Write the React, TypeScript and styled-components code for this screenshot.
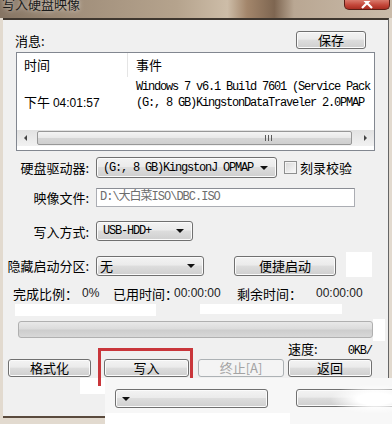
import React from 'react'
import styled, { createGlobalStyle } from 'styled-components'

const GlobalStyle = createGlobalStyle`
  * { box-sizing: border-box; }
  html, body { margin: 0; padding: 0; background: #fff; }
  body { font-family: "Noto Sans CJK SC", "Liberation Sans", sans-serif; }
`

const MONO = `"Liberation Mono", "Noto Sans CJK SC", monospace`
const SANS = `"Noto Sans CJK SC", "Liberation Sans", sans-serif`

const Window = styled.div`
  position: relative;
  width: 392px;
  height: 424px;
  overflow: hidden;
  background: #e2dacf;
  display: flex;
  flex-direction: column;
`

const TitleBar = styled.div`
  height: 18px;
  flex: none;
  display: flex;
  justify-content: space-between;
  align-items: flex-start;
  background: linear-gradient(
    90deg,
    #857463 0%,
    #a08e7a 18%,
    #b5a38d 45%,
    #cdbda8 58%,
    #a3866b 63%,
    #7e6651 70%,
    #b9a793 75%,
    #cabba9 100%
  );
  overflow: hidden;
`

const TitleText = styled.div`
  margin: -3px 0 0 2px;
  font-size: 13px;
  line-height: 14px;
  color: #1b1b1b;
  text-shadow: 0 0 5px rgba(255, 255, 255, 0.8);
`

const CloseButton = styled.div`
  width: 46px;
  height: 10px;
  margin-right: 2px;
  display: flex;
  justify-content: center;
  align-items: flex-end;
  border: 1px solid #5b1e16;
  border-top: none;
  border-radius: 0 0 5px 5px;
  background: linear-gradient(#d97a6c, #c4473a 55%, #a92d21);
`

const Body = styled.div`
  flex: 1;
  margin: 0 3px 6px;
  display: flex;
  flex-direction: column;
  background: #f0f0f0;
  border-top: 2px solid #3f372f;
  border-right: 1px solid #666;
  border-bottom: 2px solid #5a4a3d;
`

const MsgHeader = styled.div`
  height: 18px;
  margin: 11px 22px 0 12px;
  display: flex;
  justify-content: space-between;
  align-items: center;
  font-size: 13px;
`

const Button = styled.button<{ $w: number; $h?: number; $ml?: number }>`
  width: ${(p) => p.$w}px;
  height: ${(p) => p.$h ?? 18}px;
  margin: 0 0 0 ${(p) => p.$ml ?? 0}px;
  padding: 0;
  flex: none;
  font-family: ${SANS};
  font-size: 13px;
  line-height: 14px;
  color: #000;
  border: 1px solid #707070;
  border-radius: 3px;
  background: linear-gradient(#f3f3f3, #ebebeb 45%, #dddddd 50%, #cfcfcf);
  box-shadow: inset 0 0 0 1px #fbfbfb;

  &:disabled {
    color: #a3a3a3;
    border-color: #adb2b5;
    background: #f4f4f4;
    box-shadow: none;
  }
`

const ListBox = styled.div`
  margin: 3px 13px 0;
  height: 99px;
  flex: none;
  display: flex;
  flex-direction: column;
  padding-bottom: 4px;
  border: 1px solid #828790;
  background: #fff;
  overflow: hidden;
`

const ListHeader = styled.div`
  height: 24px;
  flex: none;
  display: grid;
  grid-template-columns: 110px 1fr;
  font-size: 13px;
  line-height: 24px;
`

const HeadCell = styled.div<{ $pl: number }>`
  padding-left: ${(p) => p.$pl}px;
  & + & {
    border-left: 1px solid #e5e5e5;
  }
`

const ListRow = styled.div`
  flex: 1;
  display: grid;
  grid-template-columns: 110px 1fr;
  min-width: 0;
`

const TimeCell = styled.div`
  padding: 17px 0 0 7px;
  font-size: 13px;
  line-height: 16px;
  white-space: nowrap;
`

const TimeDigits = styled.span`
  font-family: "Liberation Sans", sans-serif;
  font-size: 12px;
`

const EventCell = styled.div`
  padding: 2px 0 0 9px;
  font-family: ${MONO};
  font-size: 12px;
  letter-spacing: -1.2px;
  line-height: 16px;
  white-space: nowrap;
  overflow: hidden;
`

const ScrollBar = styled.div`
  height: 16px;
  flex: none;
  display: flex;
  align-items: stretch;
  background: linear-gradient(#e2e2e2, #f1f1f1);
`

const ScrollArrow = styled.div<{ $dir: 'left' | 'right' }>`
  width: 17px;
  flex: none;
  display: flex;
  align-items: center;
  justify-content: center;

  &::before {
    content: '';
    border-top: 3px solid transparent;
    border-bottom: 3px solid transparent;
    ${(p) =>
      p.$dir === 'left'
        ? 'border-right: 3px solid #444;'
        : 'border-left: 3px solid #444;'}
  }
`

const ScrollThumb = styled.div`
  flex: 1;
  margin: 1px 5px 1px 3px;
  display: flex;
  align-items: center;
  padding-left: 227px;
  border: 1px solid #979797;
  border-radius: 2px;
  background: linear-gradient(#f4f4f4, #e8e8e8 50%, #d6d6d6 51%, #cfcfcf);
`

const Grip = styled.div`
  width: 7px;
  height: 6px;
  background: repeating-linear-gradient(90deg, #5a5a5a 0 1px, transparent 1px 3px);
`

const FieldRow = styled.div<{ $mt: number; $h: number }>`
  height: ${(p) => p.$h}px;
  margin-top: ${(p) => p.$mt}px;
  flex: none;
  display: grid;
  grid-template-columns: 86px auto;
  column-gap: 7px;
  align-items: center;
`

const FieldLabel = styled.div`
  text-align: right;
  font-size: 13px;
  white-space: nowrap;
`

const Controls = styled.div`
  height: 100%;
  display: flex;
  align-items: center;
`

const Select = styled.div<{ $w: number; $h: number; $cjk?: boolean }>`
  width: ${(p) => p.$w}px;
  height: ${(p) => p.$h}px;
  flex: none;
  display: flex;
  align-items: center;
  justify-content: space-between;
  padding: 0 8px 0 ${(p) => (p.$cjk ? 3 : 6)}px;
  border: 1px solid #707070;
  border-radius: 3px;
  background: linear-gradient(#f3f3f3, #ebebeb 45%, #dddddd 50%, #cfcfcf);
  box-shadow: inset 0 0 0 1px #fbfbfb;
  font-family: ${(p) => (p.$cjk ? SANS : MONO)};
  font-size: ${(p) => (p.$cjk ? 13 : 12)}px;
  letter-spacing: ${(p) => (p.$cjk ? 0 : -1.2)}px;
  white-space: nowrap;

  &::after {
    content: '';
    border-left: 4px solid transparent;
    border-right: 4px solid transparent;
    border-top: 4px solid #111;
  }
`

const CheckBox = styled.div`
  width: 13px;
  height: 13px;
  margin-left: 7px;
  border: 1px solid #8e8f8f;
  background: linear-gradient(135deg, #d8d8d8, #fafafa);
  box-shadow: inset 0 0 0 1px #f4f4f4;
`

const CheckLabel = styled.span`
  margin-left: 3px;
  font-size: 13px;
`

const TextInput = styled.div`
  width: 259px;
  height: 19px;
  padding-left: 3px;
  border: 1px solid #abadb3;
  border-top-color: #8a8d94;
  background: #fff;
  color: #6d6d6d;
  font-family: ${MONO};
  font-size: 12px;
  letter-spacing: -1px;
  line-height: 17px;
  white-space: nowrap;
`

const Patch = styled.div<{ $w: number; $h: number; $ml?: number; $mt?: number }>`
  width: ${(p) => p.$w}px;
  height: ${(p) => p.$h}px;
  margin-left: ${(p) => p.$ml ?? 0}px;
  margin-top: ${(p) => p.$mt ?? 0}px;
  flex: none;
  background: #fff;
`

const StatsRow = styled.div`
  height: 16px;
  margin-top: 11px;
  padding-left: 10px;
  flex: none;
  display: flex;
  align-items: center;
  font-size: 13px;
  white-space: nowrap;
`

const StatCell = styled.span<{ $w?: number; $num?: boolean }>`
  flex: none;
  width: ${(p) => (p.$w ? `${p.$w}px` : 'auto')};
  ${(p) =>
    p.$num &&
    `font-family: "Liberation Sans", sans-serif; font-size: 12px; color: #222;`}
`

const PatchRow = styled.div`
  height: 12px;
  margin-top: 3px;
  flex: none;
  display: flex;
  align-items: flex-start;
`

const ProgressRow = styled.div`
  height: 17px;
  margin-top: 5px;
  flex: none;
  display: flex;
  align-items: flex-start;
`

const Progress = styled.div`
  width: 355px;
  height: 17px;
  margin-left: 15px;
  border: 1px solid #b0b0b0;
  border-radius: 3px;
  background: linear-gradient(#e9e9e9, #dcdcdc 45%, #cdcdcd 55%, #d8d8d8);
`

const SpeedRow = styled.div`
  height: 14px;
  margin-top: 4px;
  padding-left: 285px;
  flex: none;
  display: flex;
  align-items: baseline;
  font-size: 13px;
  line-height: 14px;
  white-space: nowrap;
`

const SpeedValue = styled.span`
  margin-left: 30px;
  font-family: ${MONO};
  font-size: 12px;
  letter-spacing: -1.2px;
`

const ButtonRow = styled.div`
  height: 18px;
  margin-top: 3px;
  padding-left: 5px;
  flex: none;
  display: flex;
`

const EraseMark = styled.div`
  position: absolute;
  left: 80px;
  top: 378px;
  width: 26px;
  height: 16px;
  background: #fff;
`

const Highlight = styled.div`
  position: absolute;
  left: 98px;
  top: 348px;
  width: 95px;
  height: 38px;
  border: 3px solid #c9363b;
  border-bottom: none;
`

const Overlay = styled.div`
  position: absolute;
  left: 105px;
  top: 378px;
  right: 0;
  bottom: 0;
  padding: 11px 0 0 10px;
  display: flex;
  align-items: flex-start;
  background: #f7f7f7;
`

const Blur = styled.div`
  position: absolute;
  left: 225px;
  top: 6px;
  width: 90px;
  height: 30px;
  background: radial-gradient(closest-side, #fff 40%, rgba(255, 255, 255, 0));
`

const BottomBand = styled.div`
  position: absolute;
  left: 0;
  bottom: 0;
  width: 185px;
  height: 11px;
  background: #fff;
`

const App: React.FC = () => (
  <>
    <GlobalStyle />
    <Window>
      <TitleBar>
        <TitleText>写入硬盘映像</TitleText>
        <CloseButton>
          <svg width="12" height="8" viewBox="0 0 12 8">
            <path d="M1 -3 L11 7 M11 -3 L1 7" stroke="#fff" strokeWidth="2.2" />
          </svg>
        </CloseButton>
      </TitleBar>
      <Body>
        <MsgHeader>
          <span>消息:</span>
          <Button $w={70}>保存</Button>
        </MsgHeader>
        <ListBox>
          <ListHeader>
            <HeadCell $pl={7}>时间</HeadCell>
            <HeadCell $pl={8}>事件</HeadCell>
          </ListHeader>
          <ListRow>
            <TimeCell>
              下午 <TimeDigits>04:01:57</TimeDigits>
            </TimeCell>
            <EventCell>
              <div>Windows 7 v6.1 Build 7601 (Service Pack</div>
              <div>(G:, 8 GB)KingstonDataTraveler 2.0PMAP</div>
            </EventCell>
          </ListRow>
          <ScrollBar>
            <ScrollArrow $dir="left" />
            <ScrollThumb>
              <Grip />
            </ScrollThumb>
            <ScrollArrow $dir="right" />
          </ScrollBar>
        </ListBox>
        <FieldRow $mt={6} $h={21}>
          <FieldLabel>硬盘驱动器:</FieldLabel>
          <Controls>
            <Select $w={181} $h={21}>(G:, 8 GB)KingstonJ OPMAP</Select>
            <CheckBox />
            <CheckLabel>刻录校验</CheckLabel>
          </Controls>
        </FieldRow>
        <FieldRow $mt={10} $h={19}>
          <FieldLabel>映像文件:</FieldLabel>
          <Controls>
            <TextInput>D:\大白菜ISO\DBC.ISO</TextInput>
          </Controls>
        </FieldRow>
        <FieldRow $mt={14} $h={20}>
          <FieldLabel>写入方式:</FieldLabel>
          <Controls>
            <Select $w={97} $h={20}>USB-HDD+</Select>
          </Controls>
        </FieldRow>
        <FieldRow $mt={13} $h={20}>
          <FieldLabel>隐藏启动分区:</FieldLabel>
          <Controls>
            <Select $w={108} $h={20} $cjk>
              无
            </Select>
            <Button $w={102} $h={20} $ml={30}>
              便捷启动
            </Button>
            <Patch $w={26} $h={25} $ml={10} $mt={-2} />
          </Controls>
        </FieldRow>
        <StatsRow>
          <StatCell $w={69}>完成比例：</StatCell>
          <StatCell $w={31} $num>
            0%
          </StatCell>
          <StatCell $w={61}>已用时间：</StatCell>
          <StatCell $w={63} $num>
            00:00:00
          </StatCell>
          <StatCell $w={79}>剩余时间：</StatCell>
          <StatCell $num>00:00:00</StatCell>
        </StatsRow>
        <PatchRow>
          <Patch $w={141} $h={12} $ml={12} />
          <Patch $w={142} $h={10} $ml={44} />
        </PatchRow>
        <ProgressRow>
          <Progress />
          <Patch $w={12} $h={22} $mt={-2} />
        </ProgressRow>
        <SpeedRow>
          <span>速度:</span>
          <SpeedValue>0KB/</SpeedValue>
        </SpeedRow>
        <ButtonRow>
          <Button $w={83}>格式化</Button>
          <Button $w={85} $ml={13}>
            写入
          </Button>
          <Button $w={86} $ml={9} disabled>
            终止[A]
          </Button>
          <Button $w={84} $ml={4}>
            返回
          </Button>
        </ButtonRow>
      </Body>
      <EraseMark />
      <Highlight />
      <Overlay>
        <Select $w={153} $h={19} />
        <Button $w={100} $h={18} $ml={28} />
        <Blur />
        <BottomBand />
      </Overlay>
    </Window>
  </>
)

export default App
